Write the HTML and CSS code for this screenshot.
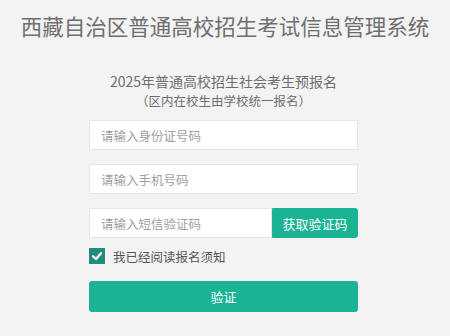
FILE: index.html
```html
<!DOCTYPE html>
<html lang="zh-CN">
<head>
<meta charset="utf-8">
<title>西藏自治区普通高校招生考试信息管理系统</title>
<link rel="stylesheet" href="styles.css">
</head>
<body>
<h1 class="title">西藏自治区普通高校招生考试信息管理系统</h1>
<div class="panel">
  <div class="sub">
    <div class="sub-main">2025年普通高校招生社会考生预报名</div>
    <div class="sub-note">（区内在校生由学校统一报名）</div>
  </div>
  <div class="field first"><input class="input" type="text" placeholder="请输入身份证号码"></div>
  <div class="field"><input class="input" type="text" placeholder="请输入手机号码"></div>
  <div class="field code-row">
    <input class="input code-input" type="text" placeholder="请输入短信验证码">
    <button class="code-btn" type="button">获取验证码</button>
  </div>
  <label class="agree">
    <span class="check"><svg viewBox="0 0 16 16" width="16" height="16"><path d="M4 8.2 L7 11 L12 5.2" fill="none" stroke="#fff" stroke-width="2.2" stroke-linecap="round" stroke-linejoin="round"/></svg></span>
    <span class="agree-text">我已经阅读报名须知</span>
  </label>
  <button class="submit" type="button">验证</button>
</div>
</body>
</html>
```
FILE: styles.css
```css
html, body {
  margin: 0;
  padding: 0;
  background: #f3f3f4;
}
body {
  font-family: "Noto Sans CJK SC", "Liberation Sans", sans-serif;
  color: #676a6c;
}
.title {
  margin: 0;
  padding-top: 11px;
  text-align: center;
  font-size: 21.5px;
  font-weight: normal;
  line-height: 30px;
  color: #6f6f6f;
  white-space: nowrap;
}
.panel {
  width: 269px;
  margin: 0 0 0 89px;
  display: flex;
  flex-direction: column;
}
.sub {
  margin-top: 30px;
  text-align: center;
}
.sub-main {
  font-size: 14px;
  line-height: 21px;
  color: #6e6e6e;
}
.sub-note {
  font-size: 12.5px;
  line-height: 18.2px;
  color: #6e6e6e;
}
.field {
  margin-top: 14px;
  display: flex;
}
.field.first {
  margin-top: 10px;
}
.input {
  box-sizing: border-box;
  width: 100%;
  height: 30px;
  border: 1px solid #e5e6e7;
  background: #fff;
  padding: 0 11px;
  font-family: inherit;
  font-size: 12.5px;
  color: #555;
  outline: none;
}
.input::placeholder {
  color: #a0a0a0;
}
.code-input {
  flex: 1;
  width: auto;
  min-width: 0;
}
.code-btn {
  flex: 0 0 86px;
  height: 30px;
  border: 1px solid #1ab394;
  background: #1ab394;
  color: #fff;
  font-family: inherit;
  font-size: 13px;
  border-radius: 0 3px 3px 0;
  padding: 0;
}
.agree {
  display: flex;
  align-items: center;
  gap: 8px;
  margin-top: 9px;
  height: 18px;
}
.check {
  width: 16px;
  height: 16px;
  background: #268b79;
  display: block;
}
.check svg { display: block; }
.agree-text {
  font-size: 12.5px;
  color: #555;
}
.submit {
  margin-top: 16px;
  height: 31px;
  border: none;
  border-radius: 3px;
  background: #1ab394;
  color: #fff;
  font-family: inherit;
  font-size: 13px;
}
```
